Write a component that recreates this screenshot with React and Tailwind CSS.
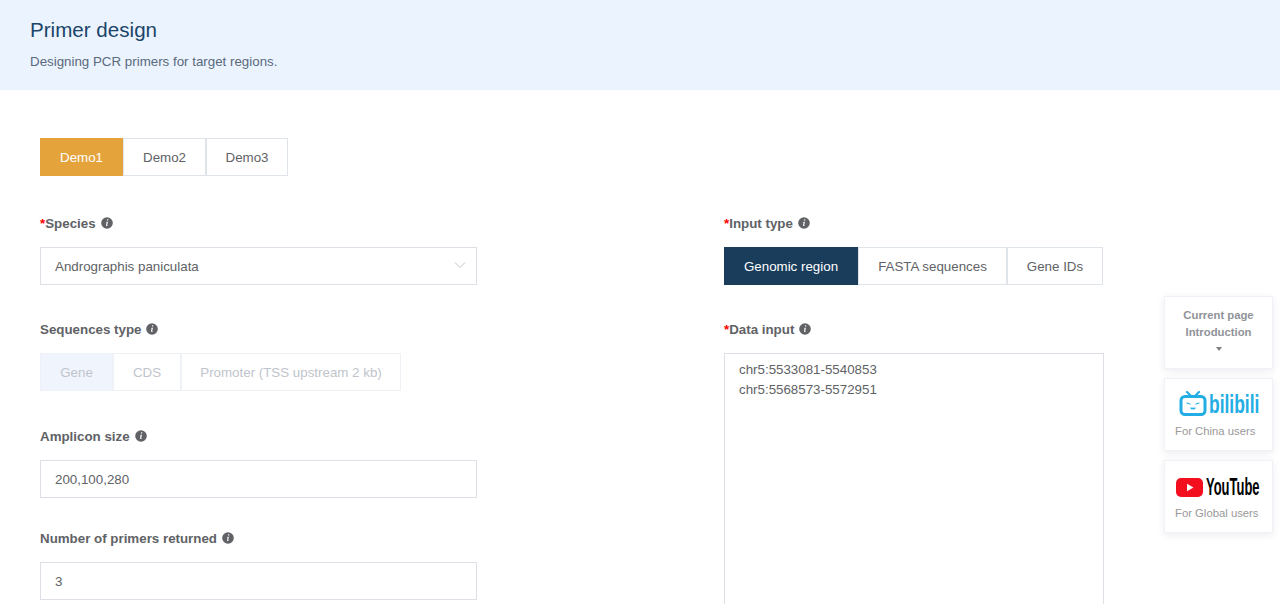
const sans = 'font-["Liberation_Sans",Arial,sans-serif]'

function Info() {
  return (
    <svg width="12" height="12" viewBox="0 0 12 12" className="inline-block ml-[5px] align-[-1px]">
      <circle cx="6" cy="6" r="5.8" fill="#606266" />
      <path d="M6.2 2.3h1.2l-.3 1.2H5.9zM5.7 4.7h1.3l-.8 3.4c0 .3.2.3.7 0l.1.4c-.7.6-1.9.8-2-.2l.6-2.9-.6-.1z" fill="#fff" />
    </svg>
  )
}

function Label({ required, text }) {
  return (
    <div className="h-[20px] leading-[20px] text-[13.33px] font-bold text-[#606266]">
      {required && <span className="text-[#f00]">*</span>}
      {text}
      <Info />
    </div>
  )
}

function Field({ value }) {
  return (
    <div className="mt-[13px] h-[38px] w-[437px] border border-[#dcdfe6] px-[14px] leading-[37px] text-[13.33px] text-[#606266]">
      {value}
    </div>
  )
}

function Segments({ items, activeClass, widths, disabled }) {
  return (
    <div className="flex">
      {items.map((item, i) => (
        <div
          key={item}
          style={{ width: widths[i] }}
          className={`h-[38px] text-center leading-[37px] text-[13.33px] border ${
            i === 0
              ? activeClass
              : disabled
                ? 'border-[#eef1f6] bg-white text-[#c0c4cc]'
                : 'border-[#dfe3ea] bg-white text-[#606266]'
          }`}
        >
          {item}
        </div>
      ))}
    </div>
  )
}

function Bilibili() {
  return (
    <div className="flex h-[28px] items-center justify-center">
      <svg width="28" height="26" viewBox="0 0 28 26" fill="none">
        <path d="M8 1l4 4M20 1l-4 4" stroke="#23ade5" strokeWidth="2.2" strokeLinecap="round" />
        <rect x="2" y="5.5" width="24" height="18" rx="4" stroke="#23ade5" strokeWidth="3" />
        <path d="M8 12l3 1M20 12l-3 1M12 17l1 1 1-1 1 1 1-1" stroke="#23ade5" strokeWidth="1.2" strokeLinecap="round" />
      </svg>
      <span className="ml-[2px] w-[50px] origin-left scale-x-[0.67] whitespace-nowrap text-[26px] font-bold leading-[24px] text-[#23ade5]">
        bilibili
      </span>
    </div>
  )
}

function Youtube() {
  return (
    <div className="flex h-[28px] translate-y-px items-center justify-center">
      <svg width="27" height="19" viewBox="0 0 27 19">
        <rect width="27" height="19" rx="5" fill="#f40f1f" />
        <path d="M11 5.8l6.5 3.7L11 13.2z" fill="#fff" />
      </svg>
      <span className="ml-[3px] w-[55px] origin-left scale-x-[0.54] whitespace-nowrap text-[24px] font-bold leading-[24px] text-black">
        YouTube
      </span>
    </div>
  )
}

export default function App() {
  return (
    <div className={`relative h-[604px] overflow-hidden bg-white ${sans}`}>
      <div className="h-[90px] bg-[#ebf3ff] pl-[30px] pt-[18px]">
        <h1 className="text-[20.6px] leading-[24px] text-[#1b4568]">Primer design</h1>
        <p className="mt-[12px] text-[13.33px] leading-[16px] text-[#5a6a7c]">Designing PCR primers for target regions.</p>
      </div>

      <div className="px-[40px] pt-[48px]">
        <Segments
          items={['Demo1', 'Demo2', 'Demo3']}
          widths={[83, 83, 82]}
          activeClass="border-[#e5a33c] bg-[#e5a33c] text-white"
        />

        <div className="mt-[38px] flex">
          <div className="w-[684px]">
            <Label required text="Species" />
            <div className="relative">
              <Field value="Andrographis paniculata" />
              <svg width="12" height="8" viewBox="0 0 12 8" fill="none" className="absolute left-[414px] top-[14px]">
                <path d="M1 1.5l5 5 5-5" stroke="#c0c4cc" strokeWidth="1" />
              </svg>
            </div>

            <div className="mt-[35px]">
              <Label text="Sequences type" />
              <div className="mt-[13px]">
                <Segments
                  disabled
                  items={['Gene', 'CDS', 'Promoter (TSS upstream 2 kb)']}
                  widths={[73, 68, 220]}
                  activeClass="border-[#eef1f6] bg-[#f0f4fc] text-[#c0c4cc]"
                />
              </div>
            </div>

            <div className="mt-[36px]">
              <Label text="Amplicon size" />
              <Field value="200,100,280" />
            </div>

            <div className="mt-[31px]">
              <Label text="Number of primers returned" />
              <Field value="3" />
            </div>
          </div>

          <div>
            <Label required text="Input type" />
            <div className="mt-[13px]">
              <Segments
                items={['Genomic region', 'FASTA sequences', 'Gene IDs']}
                widths={[134, 149, 96]}
                activeClass="border-[#1a3d5c] bg-[#1a3d5c] text-white"
              />
            </div>

            <div className="mt-[35px]">
              <Label required text="Data input" />
              <div className="mt-[13px] h-[300px] w-[380px] border border-[#dcdfe6] px-[14px] py-[6px] text-[13.33px] leading-[20px] text-[#606266]">
                <div>chr5:5533081-5540853</div>
                <div>chr5:5568573-5572951</div>
              </div>
            </div>
          </div>
        </div>
      </div>

      {/* floating side links */}
      <div className="absolute left-[1164px] top-[296px] flex w-[109px] flex-col gap-[9px]">
        <div className="h-[73px] border border-[#eef2f8] bg-white pt-[10px] text-center text-[11.3px] font-bold leading-[17px] text-[#909399] shadow-[0_2px_8px_rgba(0,0,0,0.08)]">
          <div>Current page</div>
          <div>Introduction</div>
          <div className="mx-auto mt-[6px] h-0 w-0 border-x-[3.5px] border-t-[4px] border-x-transparent border-t-[#808080]" />
        </div>
        <div className="h-[73px] border border-[#eef2f8] bg-white pt-[11px] shadow-[0_2px_8px_rgba(0,0,0,0.08)]">
          <Bilibili />
          <div className="mt-[6px] pl-[10px] text-[11.3px] leading-[14px] text-[#999]">For China users</div>
        </div>
        <div className="h-[73px] border border-[#eef2f8] bg-white pt-[11px] shadow-[0_2px_8px_rgba(0,0,0,0.08)]">
          <Youtube />
          <div className="mt-[6px] pl-[10px] text-[11.3px] leading-[14px] text-[#999]">For Global users</div>
        </div>
      </div>
    </div>
  )
}
